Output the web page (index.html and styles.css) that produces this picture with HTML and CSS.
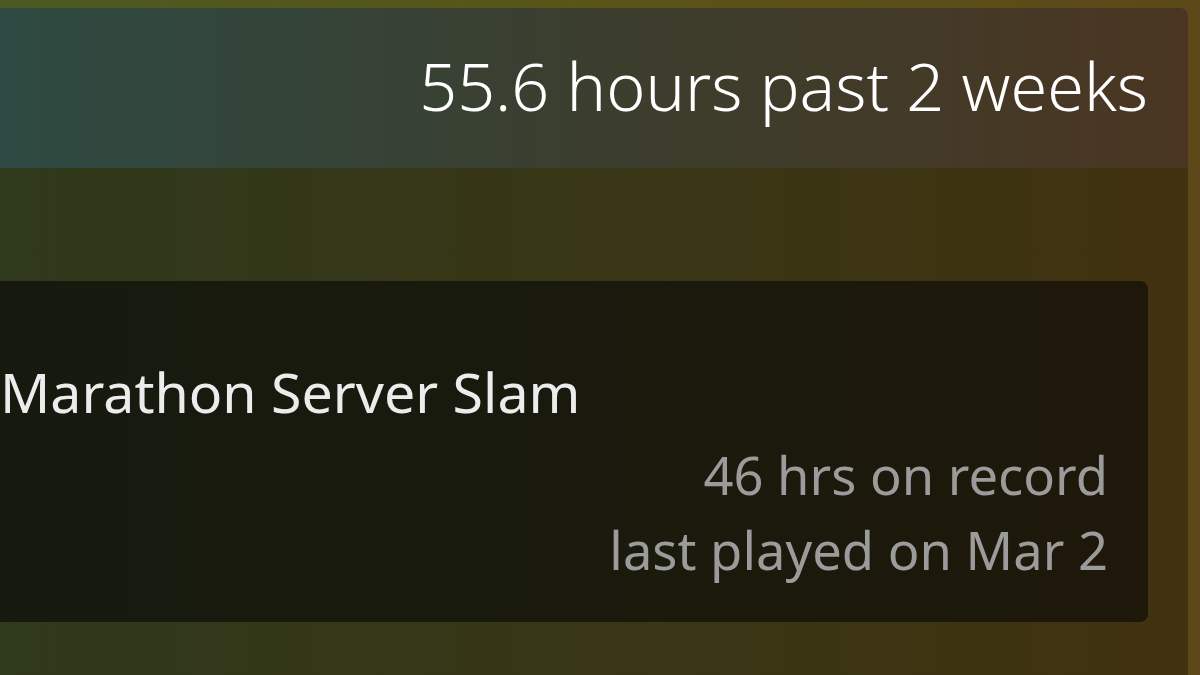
FILE: index.html
```html
<!DOCTYPE html>
<html lang="en">
<head>
    <meta charset="UTF-8">
    <meta name="viewport" content="width=device-width, initial-scale=1.0">
    <title>Recent Activity</title>
    <link rel="stylesheet" href="styles.css">
</head>
<body>
    <div class="activity">
        <div class="activity-header">
            <span class="playtime">55.6 hours past 2 weeks</span>
        </div>
        <div class="activity-body">
            <div class="game-card">
                <div class="game-name">Marathon Server Slam</div>
                <div class="game-stats">
                    <div>46 hrs on record</div>
                    <div>last played on Mar 2</div>
                </div>
            </div>
        </div>
    </div>
</body>
</html>
```

FILE: styles.css
```css
body {
    margin: 0;
    height: 675px;
    overflow: hidden;
    font-family: "Noto Sans", "Open Sans", sans-serif;
    background: linear-gradient(to right, #4a5a22, #5a5418 50%, #5c4818);
}
.activity {
    width: 1188px;
    margin-top: 8px;
    border-radius: 0 8px 0 0;
    overflow: hidden;
}
.activity-header {
    height: 160px;
    box-sizing: border-box;
    padding: 0 40px 6px 0;
    display: flex;
    align-items: center;
    justify-content: flex-end;
    background: linear-gradient(to right, #2e4a42, #3b3e2e 50%, #4a3622);
}
.playtime {
    font-size: 66.5px;
    font-weight: 300;
    color: #ffffff;
}
.activity-body {
    height: 520px;
    padding: 113px 40px 0 0;
    box-sizing: border-box;
    background: linear-gradient(to right, #2f391b, #383616 50%, #41320f);
}
.game-card {
    height: 341px;
    box-sizing: border-box;
    padding: 76px 40px 0 0;
    border-radius: 0 8px 8px 0;
    background: linear-gradient(to right, #161a0e, #191a0d 50%, #1e180a);
}
.game-name {
    font-size: 55.5px;
    line-height: 70px;
    color: #ececec;
}
.game-stats {
    margin-top: 10px;
    text-align: right;
    font-size: 52.5px;
    line-height: 75px;
    color: #9b9b9b;
}
```
